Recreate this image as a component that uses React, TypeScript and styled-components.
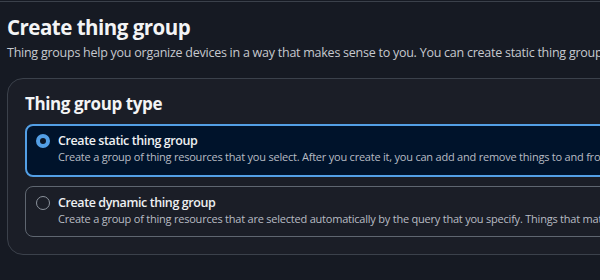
import React from "react";
import styled, { createGlobalStyle } from "styled-components";

const Global = createGlobalStyle`
  html, body { margin: 0; padding: 0; background: #161a23; }
  body { font-family: "Open Sans", "Noto Sans", sans-serif; color: #e9ebed; }
  #root { width: 600px; height: 280px; overflow: hidden; }
`;

const Page = styled.div`
  width: 600px;
  height: 280px;
  overflow: hidden;
  background: #161a23;
  padding-top: 1px;
  box-sizing: border-box;
`;

const TopRule = styled.div`
  height: 1px;
  background: #3b414b;
`;

const Header = styled.header`
  padding: 12px 0 0 7px;
  display: flex;
  flex-direction: column;
  gap: 3px;
  white-space: nowrap;
`;

const Title = styled.h1`
  margin: 0;
  font-size: 20.5px;
  line-height: 26px;
  font-weight: 700;
  color: #f3f4f5;
  letter-spacing: -0.5px;
`;

const Lead = styled.p`
  margin: 0;
  font-size: 12.5px;
  line-height: 20px;
  color: #c6c9cf;
  letter-spacing: -0.25px;
`;

const Card = styled.section`
  margin: 15px 0 0 7px;
  width: 720px;
  box-sizing: border-box;
  background: #1b1e27;
  border: 1px solid #3b414b;
  border-radius: 16px;
  padding: 13px 0 17px 17px;
  display: flex;
  flex-direction: column;
`;

const CardTitle = styled.h2`
  margin: 0 0 8px;
  font-size: 17px;
  line-height: 24px;
  font-weight: 700;
  color: #f3f4f5;
  letter-spacing: -0.4px;
`;

const Options = styled.div`
  display: flex;
  flex-direction: column;
  gap: 9px;
`;

const Option = styled.label<{ $selected?: boolean }>`
  display: flex;
  align-items: flex-start;
  gap: 8px;
  box-sizing: border-box;
  border-radius: 8px;
  border: ${(p) => (p.$selected ? "2px solid #539fe5" : "1px solid #5f6670")};
  background: ${(p) => (p.$selected ? "#00132b" : "transparent")};
  padding: ${(p) => (p.$selected ? "6px 0 11px 9px" : "7px 0 10px 10px")};
  white-space: nowrap;
`;

const Radio = styled.span<{ $checked?: boolean }>`
  flex: none;
  width: 14px;
  height: 14px;
  margin-top: 2px;
  box-sizing: border-box;
  border-radius: 50%;
  border: ${(p) => (p.$checked ? "4px solid #539fe5" : "1.5px solid #8c939d")};
  background: ${(p) => (p.$checked ? "#0b1524" : "transparent")};
`;

const OptionText = styled.div`
  display: flex;
  flex-direction: column;
`;

const OptionLabel = styled.span`
  font-size: 12.5px;
  line-height: 18px;
  font-weight: 600;
  color: #eef0f2;
  letter-spacing: -0.4px;
`;

const OptionDesc = styled.span`
  font-size: 11px;
  line-height: 14px;
  color: #b8bcc4;
  letter-spacing: -0.22px;
`;

export default function App() {
  return (
    <>
      <Global />
      <Page>
        <TopRule />
        <Header>
          <Title>Create thing group</Title>
          <Lead>
            Thing groups help you organize devices in a way that makes sense to you. You can create static thing groups or dynamic thing groups.
          </Lead>
        </Header>
        <Card>
          <CardTitle>Thing group type</CardTitle>
          <Options>
            <Option $selected>
              <Radio $checked />
              <OptionText>
                <OptionLabel>Create static thing group</OptionLabel>
                <OptionDesc>
                  Create a group of thing resources that you select. After you create it, you can add and remove things to and from the group.
                </OptionDesc>
              </OptionText>
            </Option>
            <Option>
              <Radio />
              <OptionText>
                <OptionLabel>Create dynamic thing group</OptionLabel>
                <OptionDesc>
                  Create a group of thing resources that are selected automatically by the query that you specify. Things that match the query are added.
                </OptionDesc>
              </OptionText>
            </Option>
          </Options>
        </Card>
      </Page>
    </>
  );
}
